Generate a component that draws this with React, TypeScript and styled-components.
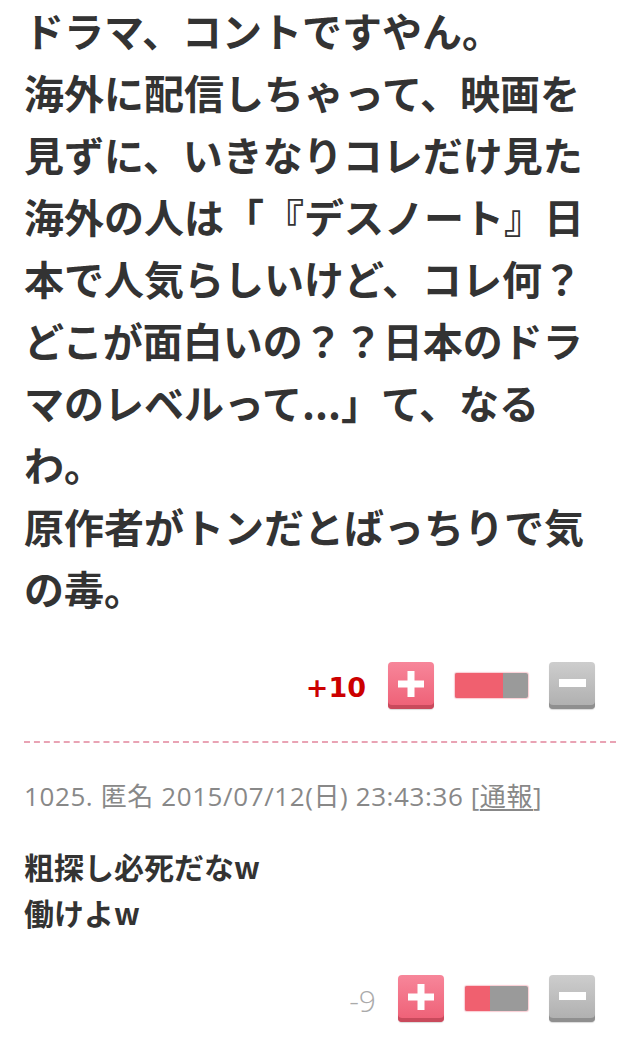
import styled, { createGlobalStyle } from "styled-components";

const GlobalStyle = createGlobalStyle`
  html, body {
    margin: 0;
    padding: 0;
    background: #fff;
  }
  body {
    font-family: "Noto Sans CJK JP", "Noto Sans", sans-serif;
    color: #333;
  }
`;

const Page = styled.main`
  width: 640px;
  box-sizing: border-box;
  padding: 0 0 40px;
`;

const Thread = styled.section`
  padding: 0 40px 0 24px;
`;

const BigBody = styled.p`
  margin: -1px 0 0;
  font-size: 40px;
  line-height: 62px;
  font-weight: 700;
  color: #333;
  text-spacing-trim: space-all;
  word-break: normal;
  line-break: strict;
`;

const Body = styled.p`
  margin: 29px 0 0;
  font-size: 30px;
  line-height: 46px;
  font-weight: 700;
  color: #333;
`;

const Meta = styled.div`
  margin-top: 35px;
  font-family: "Open Sans", "Noto Sans CJK JP", sans-serif;
  font-size: 26px;
  line-height: 36px;
  letter-spacing: 0.6px;
  color: #888;
  white-space: nowrap;
`;

const Report = styled.span`
  text-decoration: underline;
  text-underline-offset: 3px;
`;

const VoteRow = styled.div<{ $top: number }>`
  display: flex;
  justify-content: flex-end;
  align-items: center;
  gap: 21px;
  margin-top: ${(p) => p.$top}px;
  padding-right: 45px;
  height: 48px;
`;

const Score = styled.span<{ $positive: boolean }>`
  font-family: ${(p) =>
    p.$positive ? `"DejaVu Sans", sans-serif` : `"Open Sans", sans-serif`};
  font-weight: ${(p) => (p.$positive ? 700 : 300)};
  font-size: ${(p) => (p.$positive ? 27 : 30)}px;
  color: ${(p) => (p.$positive ? "#cc0000" : "#aaa")};
  margin-right: 1px;
  margin-top: 4px;
`;

const VoteButton = styled.button<{ $kind: "plus" | "minus" }>`
  width: 46px;
  height: 47px;
  padding: 0 0 3px;
  border: none;
  border-radius: 4px;
  display: flex;
  align-items: center;
  justify-content: center;
  background: ${(p) =>
    p.$kind === "plus"
      ? "linear-gradient(#f7869a, #ee5f75)"
      : "linear-gradient(#cdcdcd, #aeaeae)"};
  box-shadow: ${(p) =>
    p.$kind === "plus"
      ? "inset 0 -4px 0 #c94a5c, 0 1px 1px rgba(0,0,0,0.15)"
      : "inset 0 -4px 0 #8f8f8f, 0 1px 1px rgba(0,0,0,0.15)"};
`;

const Bar = styled.div<{ $width: number }>`
  width: ${(p) => p.$width}px;
  height: 25px;
  display: flex;
  border-radius: 2px;
  overflow: hidden;
  background: #9a9a9a;
  box-shadow: 0 0 1px 1px rgba(240, 110, 130, 0.35);
`;

const BarFill = styled.div`
  height: 100%;
  background: #f0606f;
`;

const Divider = styled.hr`
  margin: 32px 24px 0 24px;
  border: none;
  border-top: 2px dashed #e9a3b4;
  height: 0;
`;

function PlusIcon() {
  return (
    <svg width="26" height="26" viewBox="0 0 26 26">
      <rect x="0" y="9.5" width="26" height="7" fill="#fff" />
      <rect x="9.5" y="0" width="7" height="26" fill="#fff" />
    </svg>
  );
}

function MinusIcon() {
  return (
    <svg width="27" height="9" viewBox="0 0 27 9">
      <rect x="0" y="0" width="27" height="8" fill="#fff" />
    </svg>
  );
}

type VotesProps = { score: string; positive: boolean; bar: number; fill: number; top: number };

function Votes({ score, positive, bar, fill, top }: VotesProps) {
  return (
    <VoteRow $top={top}>
      <Score $positive={positive}>{score}</Score>
      <VoteButton $kind="plus" aria-label="plus">
        <PlusIcon />
      </VoteButton>
      <Bar $width={bar}>
        <BarFill style={{ width: `${fill * 100}%` }} />
      </Bar>
      <VoteButton $kind="minus" aria-label="minus">
        <MinusIcon />
      </VoteButton>
    </VoteRow>
  );
}

function App() {
  return (
    <Page>
      <GlobalStyle />
      <Thread>
        <BigBody>
          ドラマ、コントですやん。
          <br />
          海外に配信しちゃって、映画を見ずに、いきなりコレだけ見た海外の人は「『デスノート』日本で人気らしいけど、コレ何？どこが面白いの？？日本のドラマのレベルって...」て、なるわ。
          <br />
          原作者がトンだとばっちりで気の毒。
        </BigBody>
      </Thread>
      <Votes score="+10" positive bar={73} fill={0.66} top={42} />
      <Divider />
      <Thread>
        <Meta>
          1025. 匿名 2015/07/12(日) 23:43:36 [<Report>通報</Report>]
        </Meta>
        <Body>
          粗探し必死だなw
          <br />
          働けよw
        </Body>
      </Thread>
      <Votes score="-9" positive={false} bar={63} fill={0.4} top={39} />
    </Page>
  );
}

export default App;
